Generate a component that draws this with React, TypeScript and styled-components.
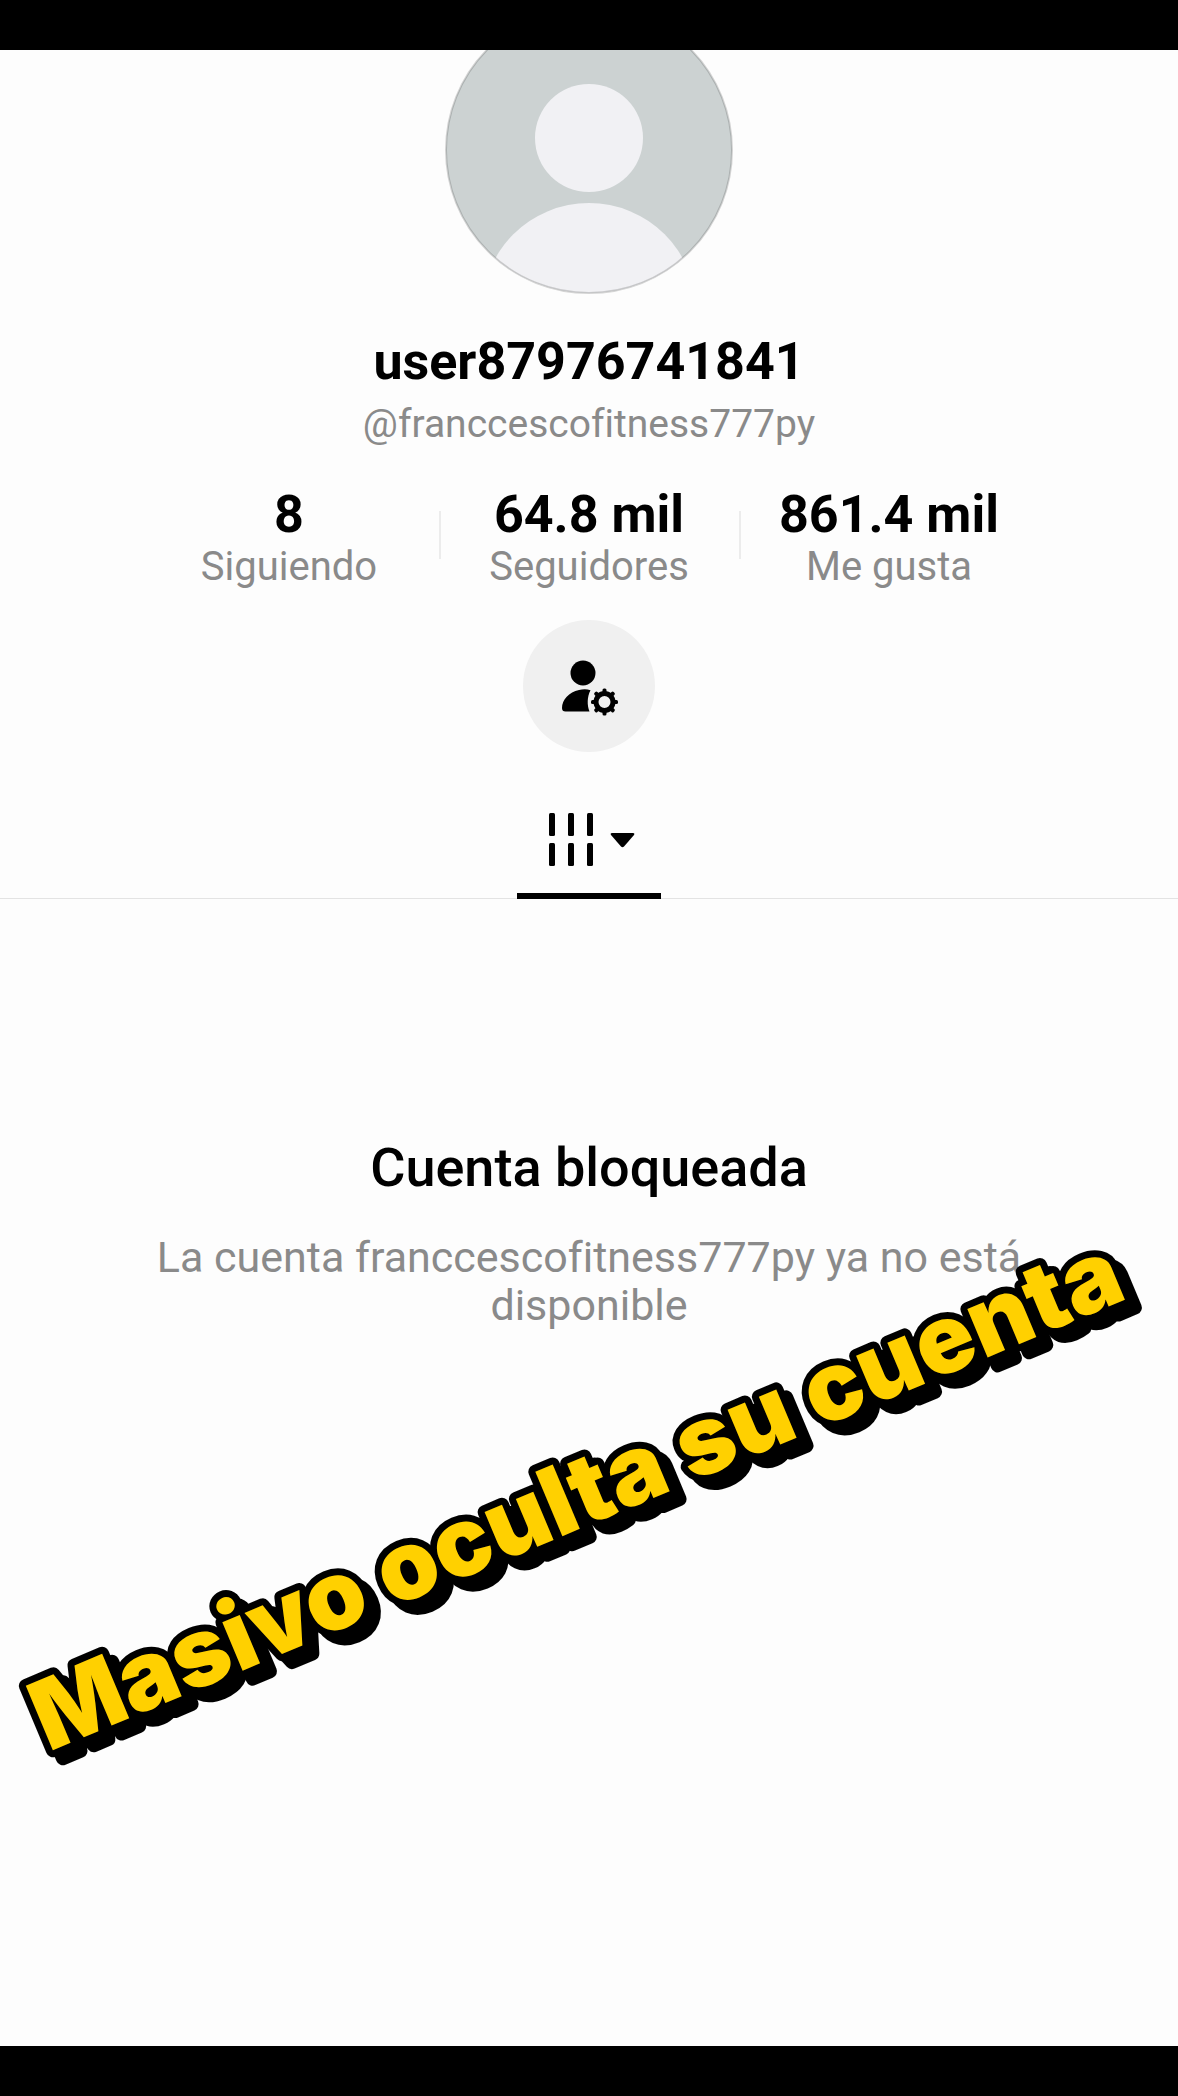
import React from "react";
import styled, { createGlobalStyle } from "styled-components";

const GlobalStyle = createGlobalStyle`
  *, *::before, *::after { box-sizing: border-box; }
  body {
    margin: 0;
    background: #000;
    font-family: Roboto, "Noto Sans", sans-serif;
    font-variant-ligatures: none;
    color: #000;
  }
`;

const Screen = styled.div`
  min-height: 100vh;
  display: flex;
  flex-direction: column;
  padding: 50px 0;
`;

const Profile = styled.main`
  position: relative;
  flex: 1;
  display: flex;
  flex-direction: column;
  align-items: center;
  overflow: hidden;
  background: #fdfdfd;
`;

const Avatar = styled.svg`
  display: block;
  flex: none;
  width: 288px;
  height: 288px;
  margin-top: -44px;
`;

const Name = styled.h1`
  margin: 36px 0 0;
  font-size: 52px;
  line-height: 64px;
  font-weight: 700;
`;

const Handle = styled.p`
  margin: 6px 0 0;
  font-size: 39px;
  line-height: 48px;
  color: #8a8a8a;
`;

const Stats = styled.ul`
  display: flex;
  list-style: none;
  margin: 39px 0 0;
  padding: 0;
`;

const Stat = styled.li`
  position: relative;
  width: 300px;
  display: flex;
  flex-direction: column;
  align-items: center;

  & + &::before {
    content: "";
    position: absolute;
    left: 0;
    top: 24px;
    width: 2px;
    height: 48px;
    background: #ececec;
  }
`;

const StatValue = styled.strong`
  font-size: 52px;
  line-height: 56px;
  font-weight: 700;
`;

const StatLabel = styled.span`
  font-size: 40px;
  line-height: 48px;
  color: #8a8a8a;
`;

const RoundButton = styled.button`
  width: 132px;
  height: 132px;
  margin: 29px 0 0;
  padding: 0;
  border: 0;
  border-radius: 50%;
  background: #f0f0f0;
  color: #000;

  svg { display: block; }
`;

const Tabs = styled.nav`
  align-self: stretch;
  display: flex;
  justify-content: center;
  margin-top: 48px;
  box-shadow: inset 0 -1px #e3e3e3;
`;

const Tab = styled.button`
  width: 144px;
  height: 99px;
  padding: 0;
  border: 0;
  border-bottom: 6px solid #000;
  background: none;
  color: #000;

  svg { display: block; }
`;

const Notice = styled.section`
  width: 100%;
  max-width: 940px;
  margin-top: 237px;
  padding: 0 24px;
  text-align: center;
`;

const NoticeTitle = styled.h2`
  margin: 0;
  font-size: 54px;
  line-height: 64px;
  font-weight: 500;
`;

const NoticeText = styled.p`
  margin: 33px 0 0;
  font-size: 43px;
  line-height: 48px;
  color: #8a8a8a;
`;

const Sticker = styled.svg`
  position: absolute;
  top: 1155px;
  left: 50%;
  width: 1178px;
  height: 640px;
  transform: translateX(-50%);
  pointer-events: none;
  filter: drop-shadow(10px 8px 0 #000);
`;

const StickerText = styled.text`
  font-family: Inter, sans-serif;
  font-size: 96px;
  font-weight: 900;
  text-anchor: middle;
  fill: #ffd000;
  stroke: #000;
  stroke-width: 14px;
  stroke-linejoin: round;
  paint-order: stroke fill;
`;

const stats = [
  { value: "8", label: "Siguiendo" },
  { value: "64.8 mil", label: "Seguidores" },
  { value: "861.4 mil", label: "Me gusta" },
];

const DefaultAvatar = () => (
  <Avatar viewBox="0 0 288 288" role="img" aria-label="Foto de perfil">
    <clipPath id="avatar-disc">
      <circle cx="144" cy="144" r="143" />
    </clipPath>
    <g clipPath="url(#avatar-disc)">
      <rect width="288" height="288" fill="#ccd2d2" />
      <circle cx="144" cy="132" r="54" fill="#f1f1f4" />
      <circle cx="144" cy="304" r="107" fill="#f1f1f4" />
    </g>
    <circle cx="144" cy="144" r="143" fill="none" stroke="#000" strokeOpacity="0.16" strokeWidth="2" />
  </Avatar>
);

const teeth = [0, 45, 90, 135, 180, 225, 270, 315];

const PersonGearIcon = () => (
  <svg width="132" height="132" viewBox="0 0 132 132" aria-hidden="true">
    <circle cx="60" cy="53" r="12.500" fill="currentColor" />
    <path
      d="M67.500 70.200C64 69 60 69 56 70C46 72 39 80 39 88Q39 91.500 42.500 91.500H66.500C64 85 64 77 67.500 70.200Z"
      fill="currentColor"
    />
    <circle cx="81.500" cy="82" r="8.500" fill="none" stroke="currentColor" strokeWidth="5" />
    {teeth.map((a) => (
      <rect
        key={a}
        x="79.500"
        y="68.500"
        width="4"
        height="5"
        rx="1.500"
        fill="currentColor"
        transform={`rotate(${a} 81.500 82)`}
      />
    ))}
  </svg>
);

const GridIcon = () => (
  <svg width="144" height="93" viewBox="0 0 144 93" aria-hidden="true">
    {[32, 51, 70].map((x) => (
      <g key={x} fill="currentColor">
        <rect x={x} y="13" width="6" height="23" rx="1.500" />
        <rect x={x} y="43" width="6" height="23" rx="1.500" />
      </g>
    ))}
    <path d="M95 33H116Q118 33 117 35L107 46.500Q105.500 48 104 46.500L94 35Q93 33 95 33Z" fill="currentColor" />
  </svg>
);

export default function App() {
  return (
    <>
      <GlobalStyle />
      <Screen>
        <Profile>
          <DefaultAvatar />
          <Name>user87976741841</Name>
          <Handle>@franccescofitness777py</Handle>
          <Stats>
            {stats.map((s) => (
              <Stat key={s.label}>
                <StatValue>{s.value}</StatValue>
                <StatLabel>{s.label}</StatLabel>
              </Stat>
            ))}
          </Stats>
          <RoundButton type="button" aria-label="Opciones de la cuenta">
            <PersonGearIcon />
          </RoundButton>
          <Tabs>
            <Tab type="button" aria-label="Videos">
              <GridIcon />
            </Tab>
          </Tabs>
          <Notice>
            <NoticeTitle>Cuenta bloqueada</NoticeTitle>
            <NoticeText>La cuenta franccescofitness777py ya no está disponible</NoticeText>
          </Notice>
          <Sticker viewBox="-589 -320 1178 640">
            <StickerText transform="rotate(-22.8)">Masivo oculta su cuenta</StickerText>
          </Sticker>
        </Profile>
      </Screen>
    </>
  );
}
